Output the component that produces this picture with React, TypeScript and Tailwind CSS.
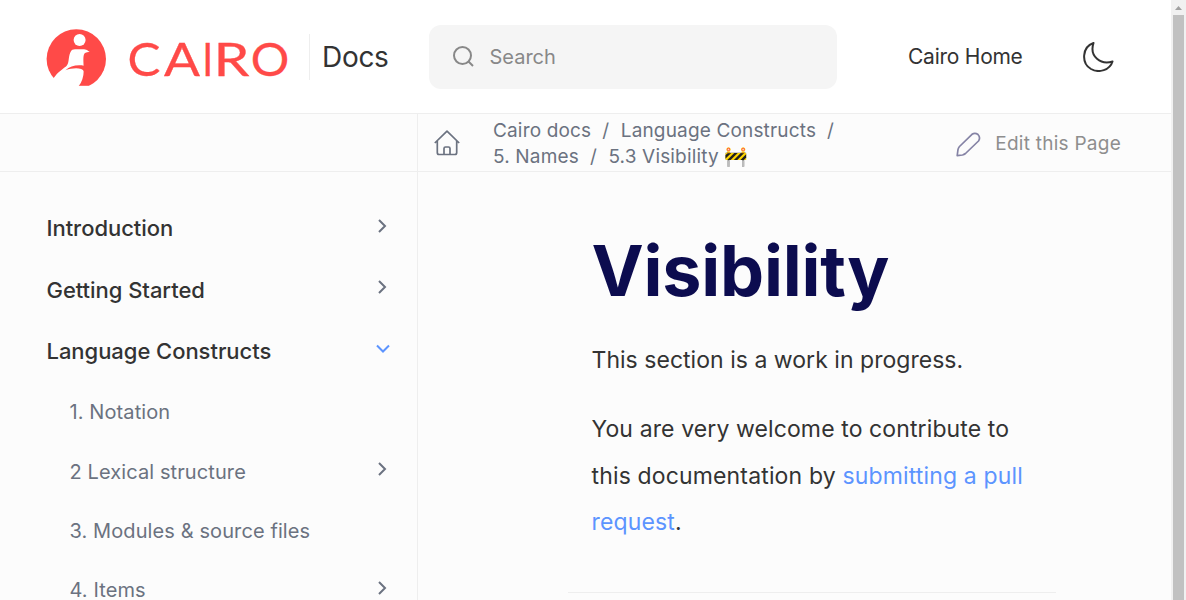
import { ReactNode } from "react";

const inter = "font-['Inter','Liberation_Sans',sans-serif]";

function Chevron({ open = false }: { open?: boolean }) {
  return open ? (
    <svg className="mr-[-1px] h-[16px] w-[16px]" viewBox="0 0 16 16" fill="none" stroke="#5c94ff" strokeWidth="2">
      <path d="M2 4.5l6 6 6-6" />
    </svg>
  ) : (
    <svg className="h-[16px] w-[16px]" viewBox="0 0 16 16" fill="none" stroke="#6b7280" strokeWidth="2">
      <path d="M5 2l6 6-6 6" />
    </svg>
  );
}

const letters = [
  { char: "C", x: 81.5, width: 33 },
  { char: "A", x: 118, width: 36 },
  { char: "I", x: 156.3, width: 11 },
  { char: "R", x: 167.5, width: 36 },
  { char: "O", x: 204.8, width: 38.5 },
];

function Logo() {
  return (
    <svg className="h-[59px] w-[244px] shrink-0" viewBox="0 0 244 59">
      <circle cx="30.300" cy="32" r="29.700" fill="#ff4a48" />
      <circle cx="33.600" cy="13" r="6" fill="#fff" />
      <path
        fill="#fff"
        d="M0 60L7.700 51C12 45 16 42.500 20 39.500C23.500 36.500 22 31 24.300 25.500C25.500 22.500 27 22.300 29 22.200L38 22.200C41.500 22.300 42 24.500 44.700 25.200C41 24.800 38.500 25.500 37.800 28C37 31 37.500 35 37.700 42C38 49 36 55 32.700 59V60Z"
      />
      <path fill="#ff4a48" d="M19.500 43.300C24 39 31 37.500 38 38.800V44.500C36.500 40.500 27 40.500 19.500 43.300Z" />
      <rect y="58.800" width="62" height="4" fill="#fff" />
      <g fill="#ff4a48" stroke="#ff4a48" strokeWidth="0.3" fontSize="47" className="font-['Lato','Liberation_Sans',sans-serif]">
        {letters.map((l) => (
          <text key={l.char} x={l.x} y="49.200" textLength={l.width} lengthAdjust="spacingAndGlyphs">
            {l.char}
          </text>
        ))}
      </g>
    </svg>
  );
}

function Row({ children, sub = false, arrow }: { children: ReactNode; sub?: boolean; arrow?: "right" | "down" }) {
  return (
    <li
      className={
        sub
          ? "flex h-[59.4px] items-center justify-between pl-[23px] text-[20px] tracking-[0.1px] text-[#6b7280]"
          : "flex h-[61.5px] items-center justify-between text-[22px] font-medium tracking-[-0.04px] text-[#333]"
      }
    >
      <span>{children}</span>
      {arrow && (
        <span className={sub ? "-mt-[5px]" : "-mt-[6px]"}>
          <Chevron open={arrow === "down"} />
        </span>
      )}
    </li>
  );
}

function Slash() {
  return <span className="mr-[11.5px] ml-[11px]">/</span>;
}

export default function App() {
  return (
    <div className={`flex h-[600px] w-[1186px] overflow-hidden bg-[#fcfcfc] ${inter}`}>
      <div className="flex w-[1171px] flex-col">
        <header className="flex h-[114px] shrink-0 items-center border-b border-[#eee] bg-white pl-[46px]">
          <Logo />
          <div className="ml-[19px] flex h-[46px] items-center border-l border-[#eee] pl-[12px] text-[28px] tracking-[-0.3px] text-[#333]">Docs</div>
          <div className="ml-auto flex h-[64px] w-[408px] items-center rounded-[12px] bg-[#f5f5f5] pl-[24px] text-[20px] text-[#888]">
            <svg className="mr-[15.5px] h-[21px] w-[21px]" viewBox="0 0 21 21" fill="none" stroke="#888" strokeWidth="2">
              <circle cx="9.500" cy="9.500" r="8.500" />
              <path d="M15.500 15.500L20 20" />
            </svg>
            Search
          </div>
          <div className="ml-[71px] w-[115px] whitespace-nowrap text-[21px] tracking-[-0.25px] text-[#333]">Cairo Home</div>
          <svg className="mr-[57.5px] ml-[59.5px] h-[30px] w-[31px]" viewBox="0 0 31 30" fill="none" stroke="#333" strokeWidth="2" strokeLinejoin="round">
            <path d="M10.500 1C-1 5-2 21 8 27C16 31.500 27 28 29.500 19.500C18 23 6 15 10.500 1Z" />
          </svg>
        </header>
        <div className="flex h-[58px] shrink-0 border-b border-[#eee]">
          <div className="w-[418px] shrink-0 border-r border-[#eee]" />
          <div className="flex w-full items-center pl-[15.5px] text-[19px] text-[#6b7280]">
            <svg className="h-[26px] w-[26px] shrink-0" viewBox="0 0 26 26" fill="none" stroke="#6b7280" strokeWidth="1.700" strokeLinejoin="round">
              <path d="M.800 13L13 1.200 25.200 13M3.300 11V22.500Q3.300 24.500 5 24.500H21Q22.700 24.500 22.700 22.500V11M10 24V18.500Q10 17 11.500 17H14.500Q16 17 16 18.500V24" />
            </svg>
            <div className="ml-[33.5px] pt-[2px] tracking-[0.16px] whitespace-nowrap leading-[26px]">
              <div>Cairo docs<Slash />Language Constructs<Slash /></div>
              <div>5. Names<Slash />5.3 Visibility 🚧</div>
            </div>
            <div className="mr-[50px] ml-auto flex items-center pt-[3px] tracking-[0.25px] whitespace-nowrap text-[#8e8e8e]">
              <svg className="mr-[14px] h-[25px] w-[25px]" viewBox="0 0 25 25" fill="none" stroke="#8583a5" strokeWidth="1.700" strokeLinejoin="round">
                <path d="M1.200 23.600L2 17.500Q2.300 16 3.500 14.500L16 2.300Q19 .200 22 2.500Q24.800 5.500 22.500 9L9.500 21.500Q8 22.700 6.500 23Z" />
              </svg>
              Edit this Page
            </div>
          </div>
        </div>
        <main className="flex min-h-0 grow">
          <ul className="w-[418px] shrink-0 border-r border-[#eee] pt-[26px] pr-[27.5px] pl-[46.5px]">
            <Row arrow="right">Introduction</Row>
            <Row arrow="right">Getting Started</Row>
            <Row arrow="down">Language Constructs</Row>
            <Row sub>1. Notation</Row>
            <Row sub arrow="right">2 Lexical structure</Row>
            <Row sub>3. Modules &amp; source files</Row>
            <Row sub arrow="right">4. Items</Row>
          </ul>
          <article className="ml-[150px] w-[488px] px-[23.5px] pt-[58px] text-[23px] leading-[46.500px] tracking-[0.15px] text-[#333]">
            <h1 className="-mt-[1px] text-[70px] leading-[84px] font-bold tracking-[-0.2px] text-[#0c0c4f]">Visibility</h1>
            <p className="mt-[24px] tracking-[0.03px] whitespace-nowrap">This section is a work in progress.</p>
            <p className="mt-[22.5px] whitespace-nowrap">
              <span className="tracking-[0.11px]">You are very welcome to contribute to</span><br />this documentation by <a className="text-[#5c94ff]">submitting a pull<br />request</a>.
            </p>
            <hr className="-mx-[23.5px] mt-[46.5px] border-[#eee]" />
          </article>
        </main>
      </div>
      <div className="flex w-[15px] flex-col bg-[#f1f1f1]">
        <div className="flex h-[15px] items-center justify-center">
          <svg className="h-[4px] w-[7px]" viewBox="0 0 7 4"><path d="M0 4L3.500 0L7 4Z" fill="#a0a0a0" /></svg>
        </div>
        <div className="mx-[2px] grow bg-[#c1c1c1]" />
      </div>
    </div>
  );
}
